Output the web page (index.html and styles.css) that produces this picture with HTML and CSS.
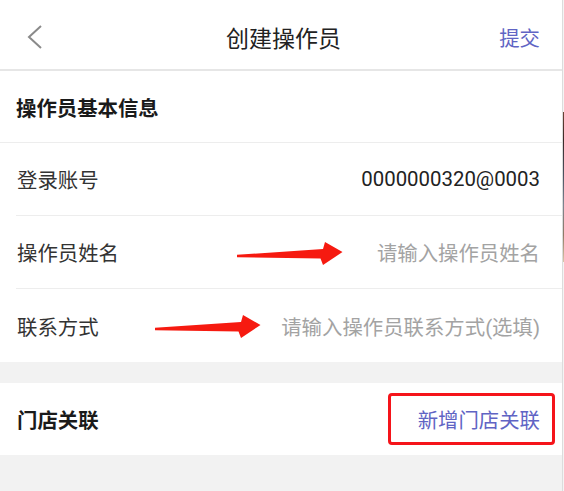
FILE: index.html
```html
<!DOCTYPE html>
<html lang="zh-CN">
<head>
<meta charset="utf-8">
<title>创建操作员</title>
<link rel="stylesheet" href="styles.css">
</head>
<body>
<div class="app">
  <main class="page">
    <header class="nav">
      <div class="nav-left">
        <svg class="back" width="16" height="24" viewBox="0 0 16 24" aria-hidden="true">
          <polyline points="14,1 2,12 14,23" fill="none" stroke="#8a8a8a" stroke-width="2" stroke-linejoin="miter"/>
        </svg>
      </div>
      <h1 class="nav-title">创建操作员</h1>
      <div class="nav-right"><span class="link">提交</span></div>
    </header>

    <section class="card">
      <div class="section-title">操作员基本信息</div>
      <div class="row">
        <span class="label">登录账号</span>
        <span class="value">0000000320@0003</span>
      </div>
      <div class="row">
        <span class="label">操作员姓名</span>
        <span class="placeholder">请输入操作员姓名</span>
        <svg class="arrow arrow-one" width="108" height="25" viewBox="0 0 108 25" aria-hidden="true">
          <polygon points="1,13.8 87,8 89,1 106.5,11 87,24 84.5,17.5 1,16.2" fill="#f61a10"/>
        </svg>
      </div>
      <div class="row">
        <span class="label">联系方式</span>
        <span class="placeholder">请输入操作员联系方式(选填)</span>
        <svg class="arrow arrow-two" width="108" height="25" viewBox="0 0 108 25" aria-hidden="true">
          <polygon points="1,13.8 87,8 89,1 106.5,11 87,24 84.5,17.5 1,16.2" fill="#f61a10"/>
        </svg>
      </div>
    </section>

    <section class="card store">
      <span class="store-title">门店关联</span>
      <span class="link">新增门店关联</span>
      <div class="highlight"></div>
    </section>
  </main>
  <div class="edge"></div>
  <div class="strip"></div>
</div>
</body>
</html>
```

FILE: styles.css
```css
* {
  box-sizing: border-box;
}

html, body {
  margin: 0;
  padding: 0;
  height: 491px;
}

body {
  font-family: Roboto, "Noto Sans CJK SC", sans-serif;
  background: #f2f2f2;
  color: #333;
}

.app {
  display: flex;
  height: 491px;
}

.page {
  flex: 1;
  background: #f2f2f2;
}

.edge {
  width: 1px;
  background: #dcdcdc;
}

.strip {
  width: 1px;
  background: linear-gradient(to bottom,
    #f4f4f4 0, #f4f4f4 112px,
    #6a4436 112px, #3a2a28 140px, #4c5260 175px,
    #7d8490 205px, #8f7a66 235px, #d9c6a8 262px,
    #f4f4f4 262px, #f4f4f4 100%);
}

.nav {
  height: 71px;
  background: #fff;
  border-bottom: 2px solid #e6e6e6;
  display: grid;
  grid-template-columns: 1fr auto 1fr;
  align-items: center;
  padding: 5px 22px 0 27px;
}

.nav-left {
  display: flex;
  align-items: center;
}

.back {
  display: block;
}

.nav-title {
  margin: 0;
  font-size: 23px;
  font-weight: 400;
  color: #222;
}

.nav-right {
  display: flex;
  justify-content: flex-end;
}

.link {
  font-size: 20.4px;
  color: #6064c4;
}

.card {
  background: #fff;
}

.section-title {
  height: 72px;
  display: flex;
  align-items: center;
  padding-left: 16px;
  font-size: 20.4px;
  font-weight: 700;
  color: #1a1a1a;
  border-bottom: 1px solid #ededed;
}

.row {
  position: relative;
  height: 73px;
  margin-left: 16px;
  padding: 0 22px 0 1px;
  display: flex;
  align-items: center;
  justify-content: space-between;
  border-bottom: 1px solid #ededed;
  font-size: 20.4px;
}

.row:last-child {
  border-bottom: none;
}

.label {
  color: #333;
}

.value {
  color: #222;
}

.placeholder {
  color: #a3a3a3;
}

.arrow {
  position: absolute;
  top: 25px;
}

.arrow-one {
  left: 220px;
}

.arrow-two {
  left: 138px;
}

.store {
  position: relative;
  margin-top: 21px;
  height: 72px;
  display: flex;
  align-items: center;
  justify-content: space-between;
  padding: 0 22px 0 17px;
}

.store-title {
  font-size: 20.4px;
  font-weight: 700;
  color: #1a1a1a;
}

.highlight {
  position: absolute;
  top: 10px;
  right: 7px;
  width: 167px;
  height: 52px;
  border: 3px solid #f5141a;
  border-radius: 4px;
}
```
